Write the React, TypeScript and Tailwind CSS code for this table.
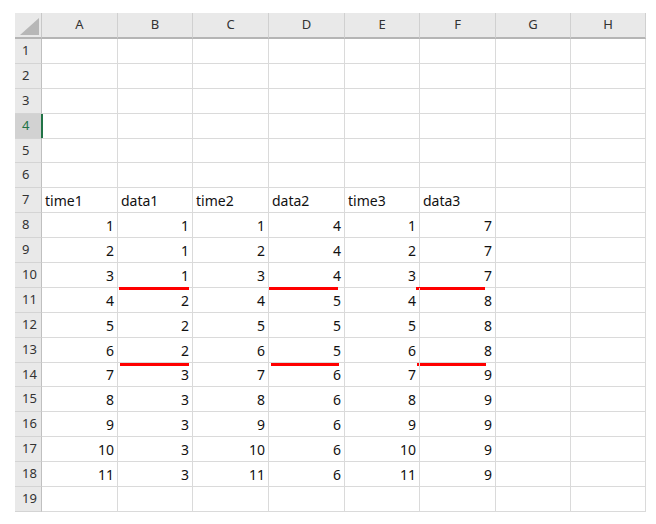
import React from "react";

const colW = ["w-[76px]", "w-[75px]", "w-[76px]", "w-[76px]", "w-[75px]", "w-[76px]", "w-[75px]", "w-[75px]"];
const letters = ["A", "B", "C", "D", "E", "F", "G", "H"];

type Cell = { v: string; num?: boolean; mark?: string };

// red underline markers drawn over the cell borders (row -> col -> classes)
const marks: Record<number, Record<number, string>> = {
  10: {
    1: "left-[1px] right-[3px] bottom-[-3px]",
    3: "left-0 right-[6px] bottom-[-3px]",
    5: "left-[-4px] right-[10px] bottom-[-3px]",
  },
  13: {
    1: "left-[2px] right-[3px] bottom-[-4px]",
    3: "left-[2px] right-[5px] bottom-[-4px]",
    5: "left-[-3px] right-[9px] bottom-[-4px]",
  },
};

function buildRows(): Cell[][] {
  const rows: Cell[][] = [];
  for (let r = 1; r <= 19; r++) {
    const row: Cell[] = Array.from({ length: 8 }, () => ({ v: "" }));
    if (r === 7) {
      ["time1", "data1", "time2", "data2", "time3", "data3"].forEach((t, i) => (row[i] = { v: t }));
    } else if (r >= 8 && r <= 18) {
      const t = r - 7;
      const d = t <= 3 ? 0 : t <= 6 ? 1 : 2;
      row[0] = { v: String(t), num: true };
      row[1] = { v: String(1 + d), num: true };
      row[2] = { v: String(t), num: true };
      row[3] = { v: String(4 + d), num: true };
      row[4] = { v: String(t), num: true };
      row[5] = { v: String(7 + d), num: true };
    }
    const m = marks[r];
    if (m) Object.keys(m).forEach((k) => (row[Number(k)].mark = m[Number(k)]));
    rows.push(row);
  }
  return rows;
}

const font = { fontFamily: '"Noto Sans", "Liberation Sans", sans-serif' };

export default function App() {
  const rows = buildRows();
  return (
    <div className="w-[656px] h-[524px] bg-white pt-[13px] pl-[15px] text-[#111]" style={font}>
      {/* header row */}
      <div className="flex h-[26px]">
        <div className="w-[27px] h-full bg-[#e9e9e9] border-r border-r-[#c8c8c8] border-b-2 border-b-[#b5b5b5] flex items-end justify-end pr-[2px] pb-[2px]">
          <svg width="19" height="17" viewBox="0 0 19 17">
            <polygon points="0,17 19,17 19,0" fill="#b7b7b7" />
          </svg>
        </div>
        {letters.map((l, i) => (
          <div
            key={l}
            className={`${colW[i]} h-full bg-[#e9e9e9] border-r border-r-[#d0d0d0] border-b-2 border-b-[#b5b5b5] flex items-center justify-center text-[13px] text-[#333]`}
          >
            {l}
          </div>
        ))}
      </div>
      {rows.map((row, ri) => {
        const rn = ri + 1;
        const h = rn === 5 || rn === 14 ? "h-[24px]" : "h-[25px]";
        const sel = rn === 4;
        return (
          <div key={rn} className={`flex ${h}`}>
            <div
              className={`w-[27px] h-full border-b border-b-[#d4d4d4] border-r flex items-center pl-[7px] text-[13px] ${
                sel ? "bg-[#d2d2d2] text-[#217346] border-r-2 border-r-[#217346] w-[28px] mr-[-1px]" : "bg-[#e9e9e9] text-[#333] border-r-[#c0c0c0]"
              }`}
            >
              {rn}
            </div>
            {row.map((c, ci) => (
              <div
                key={ci}
                className={`relative ${colW[ci]} h-full border-r border-b border-[#dadada] flex items-end pb-[4px] text-[14px] leading-[14px] ${
                  c.num ? "justify-end pr-[3px]" : "justify-start pl-[3px]"
                }`}
              >
                {c.v}
                {c.mark && <div className={`absolute h-[3px] bg-[#ff0000] ${c.mark}`} />}
              </div>
            ))}
          </div>
        );
      })}
    </div>
  );
}
